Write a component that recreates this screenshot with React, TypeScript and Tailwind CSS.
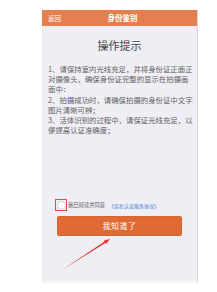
export default function App() {
  return (
    <div
      className="w-[217px] h-[292px] bg-white pt-[10px] pl-[42px]"
      style={{ fontFamily: '"Noto Sans CJK SC", "Noto Sans", sans-serif' }}
    >
      <div className="relative flex flex-col w-[156px] h-[273px] bg-[#efeef4] border-r border-[#d6d6da] border-b-2 border-b-[#f6f6f8]">
        {/* header */}
        <div className="flex items-center h-[16px] bg-[#e4804f] text-white">
          <div className="flex-1 pl-[6px] text-[6.5px] leading-none">返回</div>
          <div className="text-[7.5px] font-bold leading-none">身份鉴别</div>
          <div className="flex-1" />
        </div>

        <h1 className="mt-[12px] text-center text-[11px] leading-[14px] text-[#444]">操作提示</h1>

        <div className="mt-[12px] pl-[6px] text-[7.4px] leading-[10.2px] text-[#5f5f5f] whitespace-nowrap">
          <p>
            1、请保持室内光线充足，并将身份证正面正
            <br />
            对摄像头，确保身份证完整的显示在拍摄画
            <br />
            面中：
          </p>
          <p>
            2、拍摄成功时，请确保拍摄的身份证中文字
            <br />
            图片清晰可辨；
          </p>
          <p>
            3、活体识别的过程中，请保证光线充足，以
            <br />
            便提高认证准确度；
          </p>
        </div>

        {/* agreement */}
        <div className="mt-[64px] flex items-center h-[12px] pl-[13px] whitespace-nowrap">
          <div className="flex items-center justify-center w-[12px] h-[12px] border border-[#e84848]">
            <div className="w-[9px] h-[9px] rounded-full bg-white border border-[#d0d0d4]" />
          </div>
          <span className="ml-[1px] text-[5.3px] leading-none text-[#555]">我已阅读并同意</span>
          <span className="ml-[4px] text-[5px] leading-none text-[#3d79d4]">《实名认证服务协议》</span>
        </div>

        <button className="mt-[5px] mx-[15px] h-[20px] rounded-[2px] bg-[#e06a33] border border-[#d8642e] text-white text-[8px] font-normal leading-[18px] tracking-[0.5px]">
          我知道了
        </button>

        {/* annotation arrow */}
        <svg className="absolute left-0 top-0 pointer-events-none" width="155" height="271" viewBox="0 0 155 271">
          <polygon
            points="20,260 63.39,232.93 64.15,234.11 68,229 61.77,230.41 62.53,231.59"
            fill="#f03434"
          />
        </svg>
      </div>
    </div>
  );
}
